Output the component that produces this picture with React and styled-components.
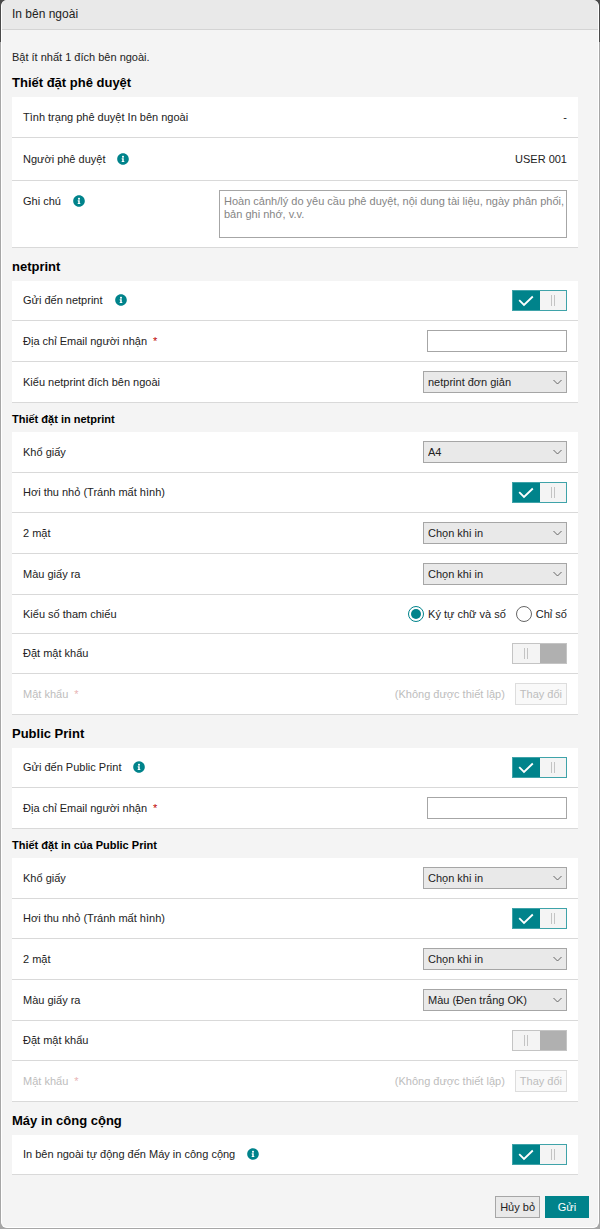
import React, { useState } from 'react';
import styled, { createGlobalStyle } from 'styled-components';
import { FaInfoCircle } from 'react-icons/fa';

const GlobalStyle = createGlobalStyle`
    * {
        box-sizing: border-box;
    }

    body {
        margin: 0;
        background: #a6a6a6 linear-gradient(#4a4a4a, #4a4a4a) top / 100% 42px no-repeat;
        color: #222222;
        font-family: 'Liberation Sans', Arial, sans-serif;
        font-size: 11px;
    }

    button,
    input,
    select,
    textarea {
        margin: 0;
        color: inherit;
        font: inherit;
    }
`;

const Dialog = styled.form`
    margin: 0 1px 1px;
    background-color: #f4f4f4;
    border: 1px solid #ffffff;
    border-top: none;
    border-radius: 6px;
    overflow: hidden;
`;

const Header = styled.header`
    height: 30px;
    padding: 0 10px;
    background-color: #e9e9e9;
    border-bottom: 1px solid #d4d4d4;
`;

const Title = styled.h1`
    margin: 0;
    font-size: 12px;
    font-weight: normal;
    line-height: 28px;
`;

const Body = styled.main`
    padding: 20px 20px 0 10px;
`;

const Intro = styled.p`
    margin: 0;
    line-height: 14px;
`;

const SectionTitle = styled.h2`
    margin: 0;
    padding-top: 5px;
    color: #000000;
    font-size: 13px;
    line-height: 28px;
`;

const SubTitle = styled.h3`
    margin: 0;
    padding-top: 3px;
    color: #000000;
    font-size: 11px;
    line-height: 26px;
`;

const Card = styled.section`
    background-color: #ffffff;
`;

const Row = styled.div`
    display: flex;
    justify-content: space-between;
    align-items: flex-start;
    gap: 12px;
    padding: ${({ $tall }) => ($tall ? '10px' : '9px')} 11px;
    border-bottom: 1px solid #d9d9d9;
    color: ${({ $disabled }) => ($disabled ? '#bdbdbd' : 'inherit')};
`;

const LabelGroup = styled.div`
    display: flex;
    align-items: center;
    gap: 12px;
    height: ${({ $small }) => ($small ? '20px' : '22px')};
`;

const Label = styled.label`
    white-space: nowrap;
`;

const Required = styled.span`
    margin-left: 6px;
    color: ${({ $disabled }) => ($disabled ? '#e8b4b4' : '#c00000')};
`;

const InfoButton = styled.button`
    display: flex;
    padding: 0;
    background: none;
    border: none;
    color: #00838b;
    font-size: 12px;
    cursor: pointer;
`;

const Value = styled.span`
    line-height: 22px;
`;

const TextInput = styled.input`
    width: 140px;
    height: 22px;
    padding: 0 4px;
    background-color: #ffffff;
    border: 1px solid #a6a6a6;
`;

const Textarea = styled.textarea`
    width: 348px;
    height: 48px;
    padding: 4px 0 4px 4px;
    border: 1px solid #a6a6a6;
    line-height: 13px;
    resize: none;

    &::placeholder {
        color: #858585;
    }
`;

const SelectWrap = styled.div`
    position: relative;
    width: 144px;
`;

const StyledSelect = styled.select`
    display: block;
    width: 100%;
    height: 22px;
    padding: 0 20px 0 4px;
    appearance: none;
    background-color: #e9e9e9;
    border: 1px solid #a6a6a6;
    border-radius: 0;
`;

const Chevron = styled.svg`
    position: absolute;
    top: 8px;
    right: 4px;
    pointer-events: none;
`;

const SwitchTrack = styled.label`
    position: relative;
    display: grid;
    grid-template-columns: 1fr 1fr;
    width: 55px;
    height: 21px;
    border: 1px solid ${({ $on }) => ($on ? '#3fa3a9' : '#c4c4c4')};
    background-color: ${({ $on }) => ($on ? '#00838b' : '#b0b0b0')};
    cursor: pointer;
`;

const SwitchInput = styled.input`
    position: absolute;
    inset: 0;
    opacity: 0;
`;

const SwitchSide = styled.span`
    display: flex;
    justify-content: center;
    align-items: center;
`;

const SwitchKnob = styled(SwitchSide)`
    gap: 2px;
    background-color: #f4f4f4;

    &::before,
    &::after {
        content: '';
        width: 1px;
        height: 11px;
        background-color: #c4c4c4;
    }
`;

const RadioGroup = styled.div`
    display: flex;
    align-items: center;
    gap: 10px;
    height: 20px;
`;

const RadioLabel = styled.label`
    display: flex;
    align-items: center;
    gap: 4px;
`;

const Radio = styled.input`
    width: 16px;
    height: 16px;
    appearance: none;
    background-color: #ffffff;
    border: 1px solid #666666;
    border-radius: 50%;

    &:checked {
        background-color: #00838b;
        background-clip: content-box;
        border-color: #00838b;
        padding: 2px;
    }
`;

const PasswordGroup = styled.div`
    display: flex;
    align-items: center;
    gap: 10px;
`;

const Button = styled.button`
    height: 22px;
    padding: 0 4px;
    background-color: #e9e9e9;
    border: 1px solid #a6a6a6;
    white-space: nowrap;

    &:disabled {
        background-color: #f9f9f9;
        border-color: #dddddd;
        color: #bdbdbd;
    }
`;

const PrimaryButton = styled(Button)`
    min-width: 44px;
    background-color: #00838b;
    border-color: #00838b;
    color: #ffffff;
`;

const Footer = styled.footer`
    display: flex;
    justify-content: flex-end;
    gap: 5px;
    padding: 21px 9px 9px;
`;

const Field = ({ id, label, info, required, disabled, tall, small, children }) => (
    <Row $tall={tall} $disabled={disabled}>
        <LabelGroup $small={small}>
            <Label htmlFor={id}>
                {label}
                {required && <Required $disabled={disabled}>*</Required>}
            </Label>
            {info && (
                <InfoButton type="button" aria-label={label}>
                    <FaInfoCircle />
                </InfoButton>
            )}
        </LabelGroup>
        {children}
    </Row>
);

const Select = ({ id, options }) => (
    <SelectWrap>
        <StyledSelect id={id}>
            {options.map((option) => (
                <option key={option}>{option}</option>
            ))}
        </StyledSelect>
        <Chevron width="11" height="7" viewBox="0 0 11 7" fill="none" stroke="#666666">
            <path d="M1.5 1L5.5 5L9.5 1" />
        </Chevron>
    </SelectWrap>
);

const Switch = ({ id, defaultOn = false }) => {
    const [on, setOn] = useState(defaultOn);

    return (
        <SwitchTrack $on={on}>
            <SwitchInput
                type="checkbox"
                id={id}
                checked={on}
                onChange={(e) => setOn(e.target.checked)}
            />
            {on ? (
                <>
                    <SwitchSide>
                        <svg width="16" height="12" viewBox="0 0 16 12" fill="none" stroke="#ffffff" strokeWidth="1.8">
                            <path d="M1.2 5.2L6 10L14.8 1.5" />
                        </svg>
                    </SwitchSide>
                    <SwitchKnob />
                </>
            ) : (
                <>
                    <SwitchKnob />
                    <SwitchSide />
                </>
            )}
        </SwitchTrack>
    );
};

const PasswordField = ({ id }) => (
    <Field id={id} label="Mật khẩu" required disabled>
        <PasswordGroup>
            <span>(Không được thiết lập)</span>
            <Button type="button" id={id} disabled>Thay đổi</Button>
        </PasswordGroup>
    </Field>
);

const App = () => {
    const [refType, setRefType] = useState('alnum');

    const handleSubmit = (e) => {
        e.preventDefault();
    };

    return (
        <>
            <GlobalStyle />
            <Dialog onSubmit={handleSubmit}>
                <Header>
                    <Title>In bên ngoài</Title>
                </Header>
                <Body>
                    <Intro>Bật ít nhất 1 đích bên ngoài.</Intro>

                    <SectionTitle>Thiết đặt phê duyệt</SectionTitle>
                    <Card>
                        <Field label="Tình trạng phê duyệt In bên ngoài">
                            <Value>-</Value>
                        </Field>
                        <Field label="Người phê duyệt" info tall>
                            <Value>USER 001</Value>
                        </Field>
                        <Field id="note" label="Ghi chú" info>
                            <Textarea
                                id="note"
                                placeholder="Hoàn cảnh/lý do yêu cầu phê duyệt, nội dung tài liệu, ngày phân phối, bản ghi nhớ, v.v."
                            />
                        </Field>
                    </Card>

                    <SectionTitle>netprint</SectionTitle>
                    <Card>
                        <Field id="np-send" label="Gửi đến netprint" info small>
                            <Switch id="np-send" defaultOn />
                        </Field>
                        <Field id="np-email" label="Địa chỉ Email người nhận" required>
                            <TextInput id="np-email" type="email" />
                        </Field>
                        <Field id="np-type" label="Kiểu netprint đích bên ngoài">
                            <Select id="np-type" options={['netprint đơn giản', 'netprint']} />
                        </Field>
                    </Card>

                    <SubTitle>Thiết đặt in netprint</SubTitle>
                    <Card>
                        <Field id="np-paper" label="Khổ giấy">
                            <Select id="np-paper" options={['A4', 'A3', 'B4', 'B5']} />
                        </Field>
                        <Field id="np-reduce" label="Hơi thu nhỏ (Tránh mất hình)" small>
                            <Switch id="np-reduce" defaultOn />
                        </Field>
                        <Field id="np-duplex" label="2 mặt">
                            <Select id="np-duplex" options={['Chọn khi in']} />
                        </Field>
                        <Field id="np-color" label="Màu giấy ra">
                            <Select id="np-color" options={['Chọn khi in']} />
                        </Field>
                        <Field id="ref-alnum" label="Kiểu số tham chiếu" small>
                            <RadioGroup>
                                <RadioLabel>
                                    <Radio
                                        type="radio"
                                        id="ref-alnum"
                                        name="ref"
                                        checked={refType === 'alnum'}
                                        onChange={() => setRefType('alnum')}
                                    />
                                    Ký tự chữ và số
                                </RadioLabel>
                                <RadioLabel>
                                    <Radio
                                        type="radio"
                                        name="ref"
                                        checked={refType === 'number'}
                                        onChange={() => setRefType('number')}
                                    />
                                    Chỉ số
                                </RadioLabel>
                            </RadioGroup>
                        </Field>
                        <Field id="np-lock" label="Đặt mật khẩu" small>
                            <Switch id="np-lock" />
                        </Field>
                        <PasswordField id="np-password" />
                    </Card>

                    <SectionTitle>Public Print</SectionTitle>
                    <Card>
                        <Field id="pp-send" label="Gửi đến Public Print" info small>
                            <Switch id="pp-send" defaultOn />
                        </Field>
                        <Field id="pp-email" label="Địa chỉ Email người nhận" required>
                            <TextInput id="pp-email" type="email" />
                        </Field>
                    </Card>

                    <SubTitle>Thiết đặt in của Public Print</SubTitle>
                    <Card>
                        <Field id="pp-paper" label="Khổ giấy">
                            <Select id="pp-paper" options={['Chọn khi in']} />
                        </Field>
                        <Field id="pp-reduce" label="Hơi thu nhỏ (Tránh mất hình)" small>
                            <Switch id="pp-reduce" defaultOn />
                        </Field>
                        <Field id="pp-duplex" label="2 mặt">
                            <Select id="pp-duplex" options={['Chọn khi in']} />
                        </Field>
                        <Field id="pp-color" label="Màu giấy ra">
                            <Select id="pp-color" options={['Màu (Đen trắng OK)', 'Chọn khi in']} />
                        </Field>
                        <Field id="pp-lock" label="Đặt mật khẩu" small>
                            <Switch id="pp-lock" />
                        </Field>
                        <PasswordField id="pp-password" />
                    </Card>

                    <SectionTitle>Máy in công cộng</SectionTitle>
                    <Card>
                        <Field id="auto-send" label="In bên ngoài tự động đến Máy in công cộng" info small>
                            <Switch id="auto-send" defaultOn />
                        </Field>
                    </Card>
                </Body>
                <Footer>
                    <Button type="button">Hủy bỏ</Button>
                    <PrimaryButton type="submit">Gửi</PrimaryButton>
                </Footer>
            </Dialog>
        </>
    );
};

export default App;
